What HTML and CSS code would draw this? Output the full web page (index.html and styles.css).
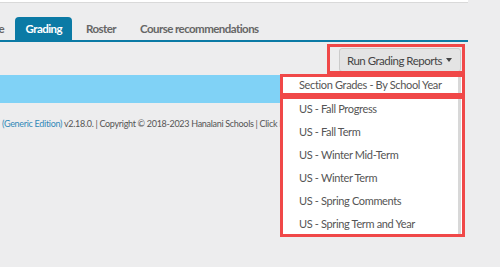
FILE: index.html
```html
<!DOCTYPE html>
<html lang="en">
<head>
<meta charset="utf-8">
<title>Grading</title>
<link rel="stylesheet" href="styles.css">
</head>
<body>
<div class="page">
  <div class="topbar"></div>
  <nav class="tabs">
    <a class="tab tab-cut">Schedule</a>
    <a class="tab active">Grading</a>
    <a class="tab">Roster</a>
    <a class="tab">Course recommendations</a>
  </nav>
  <div class="toolbar">
    <div class="reports">
      <div class="mark mark-btn">
        <button class="btn">Run Grading Reports <span class="caret"></span></button>
      </div>
      <!-- report menu (open) -->
      <div class="menu">
        <div class="mark">
          <a class="menu-item">Section Grades - By School Year</a>
        </div>
        <div class="mark">
          <a class="menu-item">US - Fall Progress</a>
          <a class="menu-item">US - Fall Term</a>
          <a class="menu-item">US - Winter Mid-Term</a>
          <a class="menu-item">US - Winter Term</a>
          <a class="menu-item">US - Spring Comments</a>
          <a class="menu-item">US - Spring Term and Year</a>
        </div>
      </div>
    </div>
  </div>
  <div class="banner"></div>
  <footer class="footer">
    <a class="link">(Generic Edition)</a> v2.18.0. | Copyright © 2018-2023 Hanalani Schools | Click <a class="link">here</a>
  </footer>
</div>
</body>
</html>
```

FILE: styles.css
```css
body {
  margin: 0;
  min-height: 267px;
  background: #ededee;
  font-family: Lato, "Open Sans", sans-serif;
}
.page { width: 468px; }
.topbar { height: 2px; background: #fff; border-bottom: 1px solid #d9d9d9; }

.tabs {
  display: flex;
  gap: 3px;
  margin-top: 14px;
  border-bottom: 2px solid #0b7aa5;
}
.tab {
  padding: 0 10.5px;
  line-height: 23px;
  font-size: 11.5px;
  font-weight: bold;
  letter-spacing: -0.55px;
  color: #666;
  white-space: nowrap;
  border-radius: 4px 4px 0 0;
}
/* tab scrolled off the left edge: only its last letter shows */
.tab-cut {
  width: 4px;
  padding: 0 8px 0 0;
  overflow: hidden;
  direction: rtl;
}
.tab.active { background: #0b7aa5; color: #fff; }

.toolbar {
  display: flex;
  justify-content: flex-end;
  padding: 2px 3px 1px 0;
}
.reports { position: relative; }
.mark { outline: 3px solid #f04848; outline-offset: -3px; }
.mark-btn { padding: 4px 4px 2px 12px; }
.btn {
  display: flex;
  align-items: center;
  gap: 4px;
  height: 24px;
  padding: 0 8px 0 7px;
  background: #e4e4e4;
  border: 1px solid #cbcbcb;
  border-radius: 3px;
  font-family: inherit;
  font-size: 11.5px;
  letter-spacing: -0.5px;
  color: #444;
}
.caret {
  border-left: 3.5px solid transparent;
  border-right: 3.5px solid transparent;
  border-top: 4px solid #444;
}

.menu {
  position: absolute;
  top: 100%;
  right: 0;
  width: 185px;
  background: #fff;
  box-shadow: inset -4px 0 0 #fff, inset -7px 0 0 #d8d8d8;
  z-index: 10;
}
.menu .mark:last-child { padding: 1px 0 2px; }
.menu-item {
  display: block;
  padding-left: 19px;
  line-height: 23px;
  font-size: 11px;
  letter-spacing: -0.35px;
  color: #555;
  white-space: nowrap;
}
.menu .mark:first-child .menu-item { line-height: 22px; }

.banner { height: 28px; margin-right: 3px; background: #80d2f6; }

.footer {
  margin-top: 14px;
  padding-left: 2px;
  font-size: 9px;
  line-height: 14px;
  letter-spacing: -0.3px;
  color: #555;
  white-space: nowrap;
}
.link { color: #3389b8; }
```
